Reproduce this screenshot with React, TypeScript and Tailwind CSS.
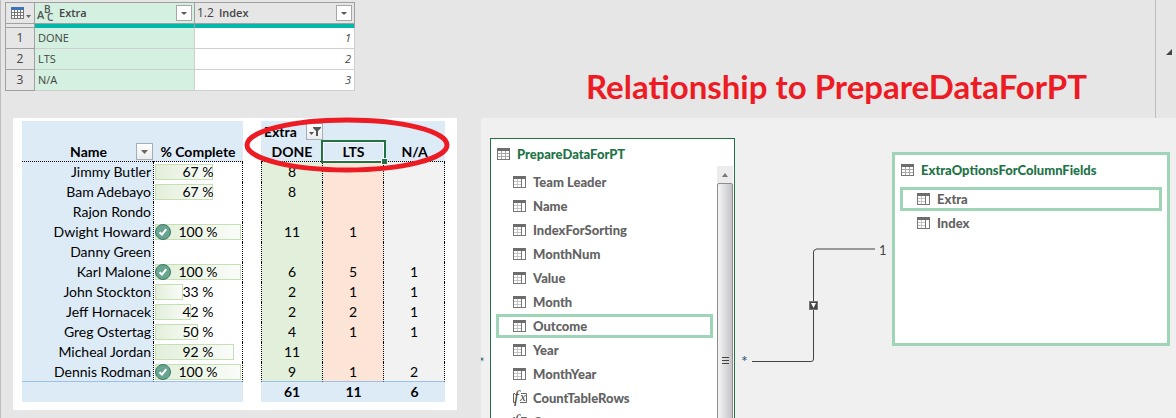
import type { ReactNode } from "react";

const QUERY_ROWS = [
  { extra: "DONE", index: 1 },
  { extra: "LTS", index: 2 },
  { extra: "N/A", index: 3 },
];

type Player = {
  name: string;
  complete?: number;
  done?: number;
  lts?: number;
  na?: number;
};

const PLAYERS: Player[] = [
  { name: "Jimmy Butler", complete: 67, done: 8 },
  { name: "Bam Adebayo", complete: 67, done: 8 },
  { name: "Rajon Rondo" },
  { name: "Dwight Howard", complete: 100, done: 11, lts: 1 },
  { name: "Danny Green" },
  { name: "Karl Malone", complete: 100, done: 6, lts: 5, na: 1 },
  { name: "John Stockton", complete: 33, done: 2, lts: 1, na: 1 },
  { name: "Jeff Hornacek", complete: 42, done: 2, lts: 2, na: 1 },
  { name: "Greg Ostertag", complete: 50, done: 4, lts: 1, na: 1 },
  { name: "Micheal Jordan", complete: 92, done: 11 },
  { name: "Dennis Rodman", complete: 100, done: 9, lts: 1, na: 2 },
];

const FIELDS = [
  "Team Leader",
  "Name",
  "IndexForSorting",
  "MonthNum",
  "Value",
  "Month",
  "Outcome",
  "Year",
  "MonthYear",
];

export default function App() {
  return (
    <div className="flex h-screen overflow-hidden border-l border-[#bdbdbd] bg-[#e6e6e6] font-['Lato','Liberation_Sans',sans-serif] text-[#1a1a1a]">
      <div className="flex w-[480px] shrink-0 flex-col items-start">
        <QueryTable />
        <PivotPanel />
      </div>

      <div className="flex min-w-0 flex-1 flex-col">
        <header className="flex h-[118px] shrink-0">
          <h1 className="flex-1 self-end pb-[10px] pl-[105px] text-[33px] leading-[44px] font-bold whitespace-nowrap text-[#ed1c24]">
            Relationship to PrepareDataForPT
          </h1>
          <div className="flex w-[21px] justify-end border-l border-[#bdbdbd] pt-[49px] pr-1">
            <svg width="6" height="6" aria-hidden="true">
              <path d="M6 0V6H0Z" fill="#444" />
            </svg>
          </div>
        </header>
        <Diagram />
      </div>
    </div>
  );
}

/* ---------- Query preview ---------- */

function QueryTable() {
  return (
    <table className="mt-[2px] ml-1 w-[350px] table-fixed border-separate border-spacing-0 font-['Open_Sans','Noto_Sans',sans-serif] text-[11px] leading-[16px] text-[#444]">
      <colgroup>
        <col className="w-[30px]" />
        <col className="w-[160px]" />
        <col className="w-[160px]" />
      </colgroup>
      <thead>
        <tr className="h-[22px]">
          <td className="border border-[#a0a0a0] p-0">
            <button type="button" aria-label="Table options" className="ml-[5px] flex items-end gap-[2px]">
              <QueryGridIcon />
              <svg width="5" height="3" className="mb-px" aria-hidden="true">
                <path d="M0 0H5L2.5 3Z" fill="#666" />
              </svg>
            </button>
          </td>
          <th scope="col" className="border-y border-r border-[#a0a0a0] bg-[#d3f0e0] p-0 font-semibold">
            <div className="flex items-center pr-[2px] pl-[2px]">
              <svg width="17" height="18" className="mr-[5px] shrink-0 overflow-visible" fill="#555" aria-hidden="true">
                <text x="0" y="15" fontSize="11">A</text>
                <text x="7" y="9" fontSize="10">B</text>
                <text x="10" y="17" fontSize="10">C</text>
              </svg>
              <span>Extra</span>
              <DropButton label="Filter Extra" />
            </div>
          </th>
          <th scope="col" className="border-y border-r border-[#a0a0a0] p-0 font-semibold">
            <div className="flex items-center pr-[2px] pl-[2px]">
              <span className="mr-[5px] text-[12px] font-normal">1.2</span>
              <span>Index</span>
              <DropButton label="Filter Index" />
            </div>
          </th>
        </tr>
        <tr className="h-1">
          <td className="border-x border-b border-[#a0a0a0] p-0" />
          <td className="border-r border-[#a0a0a0] bg-[#01b8aa] p-0" />
          <td className="border-r border-[#a0a0a0] bg-[#01b8aa] p-0" />
        </tr>
      </thead>
      <tbody>
        {QUERY_ROWS.map((row) => (
          <tr key={row.index} className="h-[21px]">
            <th scope="row" className="border-x border-b border-[#a0a0a0] p-0 text-[12px] font-normal">
              {row.index}
            </th>
            <td className="border-r border-b border-[#cfcfcf] bg-[#d3f0e0] p-0 pl-[3px]">{row.extra}</td>
            <td className="border-r border-b border-[#cfcfcf] bg-white p-0 pr-[3px] text-right italic">
              {row.index}
            </td>
          </tr>
        ))}
      </tbody>
    </table>
  );
}

function DropButton({ label }: { label: string }) {
  return (
    <button
      type="button"
      aria-label={label}
      className="ml-auto flex size-4 items-center justify-center border border-[#a6a6a6] bg-white"
    >
      <svg width="6" height="3" aria-hidden="true">
        <path d="M0 0H6L3 3Z" fill="#555" />
      </svg>
    </button>
  );
}

function QueryGridIcon() {
  return (
    <svg width="13" height="12" shapeRendering="crispEdges" aria-hidden="true">
      <rect width="13" height="12" fill="#777" />
      <rect width="13" height="3" fill="#3e73b5" />
      {[3, 6, 9].map((y) =>
        [1, 4, 7, 10].map((x) => <rect key={`${x}-${y}`} x={x} y={y} width="2" height="2" fill="#fff" />)
      )}
    </svg>
  );
}

/* ---------- Pivot tables ---------- */

function PivotPanel() {
  return (
    <section className="relative mt-[27px] ml-3 flex gap-[18px] bg-white pt-[3px] pr-3 pb-2 pl-[9px] text-[14px] leading-[18px] text-black">
      <CompletionTable />
      <ExtraTable />
      {/* Hand-drawn highlight round the column fields */}
      <svg width="208" height="58" className="pointer-events-none absolute -top-[2px] left-[230px]" aria-hidden="true">
        <ellipse cx="104" cy="29" rx="100" ry="25" fill="none" stroke="#ed1c24" strokeWidth="5" />
      </svg>
    </section>
  );
}

function CompletionTable() {
  return (
    <table className="w-[221px] table-fixed border-separate border-spacing-0">
      <colgroup>
        <col className="w-[131px]" />
        <col className="w-[90px]" />
      </colgroup>
      <thead className="bg-[#ddebf7]">
        <tr className="h-5">
          <td colSpan={2} className="p-0" />
        </tr>
        <tr className="h-[21px]">
          <th scope="col" className="relative border-b border-dotted border-black p-0 pt-[2px] pl-[2px]">
            Name
            <PivotButton label="Filter Name">
              <path d="M5 7H12L8.5 11Z" fill="#666" />
            </PivotButton>
          </th>
          <th scope="col" className="border-b border-dotted border-black p-0 pt-[2px] whitespace-nowrap">
            % Complete
          </th>
        </tr>
      </thead>
      <tbody className="[&>tr:last-child>*]:border-b [&>tr:last-child>*]:border-b-[#9bc2e6] [&>tr:last-child>*]:[border-bottom-style:solid]">
        {PLAYERS.map((p) => (
          <tr key={p.name} className="h-5">
            <th scope="row" className="bg-[#ddebf7] p-0 pr-[2px] text-right font-normal">
              {p.name}
            </th>
            <td className="border-x border-dotted border-black p-0">
              {p.complete !== undefined && <CompletionBar value={p.complete} />}
            </td>
          </tr>
        ))}
      </tbody>
      <tfoot className="bg-[#ddebf7]">
        <tr className="h-5">
          <td colSpan={2} className="p-0" />
        </tr>
      </tfoot>
    </table>
  );
}

function CompletionBar({ value }: { value: number }) {
  return (
    <div className="relative mx-px text-center">
      <div
        className="absolute inset-y-px left-0 border border-[#c6e0b4] bg-linear-to-r from-[#e2efda] to-[#fafcf9]"
        style={{ width: `${value}%` }}
      />
      {value === 100 && (
        <svg width="16" height="16" viewBox="0 0 16 16" className="absolute top-px left-0" aria-hidden="true">
          <circle cx="8" cy="8" r="7.5" fill="#68a490" stroke="#3f7a66" />
          <path d="M4.5 8.2L7 10.6L11.3 5.2" fill="none" stroke="#fff" strokeWidth="2" />
        </svg>
      )}
      <span className="relative">{value} %</span>
    </div>
  );
}

function ExtraTable() {
  return (
    <table className="w-[184px] table-fixed border-separate border-spacing-0 text-center">
      <colgroup>
        <col className="w-[62px]" />
        <col className="w-[61px]" />
        <col className="w-[61px]" />
      </colgroup>
      <thead className="bg-[#ddebf7]">
        <tr className="h-5">
          <th className="relative p-0 pt-[2px] pl-[3px] text-left">
            Extra
            <PivotButton label="Filter Extra">
              <path d="M7 4H15V5L12 8V13H10V8L7 5Z" fill="#555" />
              <path d="M3 9H8L5.5 12Z" fill="#555" />
            </PivotButton>
          </th>
          <td colSpan={2} className="p-0" />
        </tr>
        <tr className="h-[21px]">
          <th scope="col" className="border-b border-dotted border-black p-0 pt-[2px]">DONE</th>
          <th scope="col" className="relative border-b border-dotted border-black p-0 pt-[2px]">
            LTS
            {/* Active cell frame with its fill handle */}
            <span className="absolute -inset-x-[2px] -top-px -bottom-[2px] border-2 border-[#217346] outline-1 -outline-offset-3 outline-white" />
            <span className="absolute -right-[3px] -bottom-[3px] size-[6px] border-t border-l border-white bg-[#217346]" />
          </th>
          <th scope="col" className="border-b border-dotted border-black p-0 pt-[2px]">N/A</th>
        </tr>
      </thead>
      <tbody className="[&>tr:last-child>*]:border-b [&>tr:last-child>*]:border-b-[#9bc2e6] [&>tr:last-child>*]:[border-bottom-style:solid]">
        {PLAYERS.map((p) => (
          <tr key={p.name} className="h-5">
            <td className="border-x border-dotted border-black bg-[#e2efda] p-0">{p.done}</td>
            <td className="border-r border-dotted border-black bg-[#fce4d6] p-0">{p.lts}</td>
            <td className="border-r border-dotted border-black bg-[#f2f2f2] p-0">{p.na}</td>
          </tr>
        ))}
      </tbody>
      <tfoot className="bg-[#ddebf7] font-bold">
        <tr className="h-5">
          <td className="p-0">61</td>
          <td className="p-0">11</td>
          <td className="p-0">6</td>
        </tr>
      </tfoot>
    </table>
  );
}

function PivotButton({ label, children }: { label: string; children: ReactNode }) {
  return (
    <button
      type="button"
      aria-label={label}
      className="absolute right-0 bottom-px size-[17px] border border-[#a3aebb] bg-linear-to-b from-white to-[#ececec]"
    >
      <svg width="17" height="17" className="-m-px" aria-hidden="true">
        {children}
      </svg>
    </button>
  );
}

/* ---------- Relationship diagram ---------- */

function Diagram() {
  return (
    <main className="relative flex flex-1 items-start overflow-hidden bg-[#f0f0f0] text-[13px] leading-[18px] font-black text-[#636363]">
      {/* End of a relationship that leaves the view on the left */}
      <span className="absolute top-[235px] -left-[2px] text-[#2f5573] font-normal">*</span>

      <article className="mt-5 ml-[9px] w-[245px] shrink-0 border border-[#217346] bg-white">
        <EntityTitle name="PrepareDataForPT" />
        <div className="flex pr-px">
          <ul className="flex-1 pt-1 pr-1 pl-[5px]">
            {FIELDS.map((f) => (
              <Field key={f} name={f} active={f === "Outcome"} />
            ))}
            <Field name="CountTableRows" icon={<FxIcon />} />
            <Field name="Outcome" icon={<FxIcon />} />
          </ul>
          <div className="flex w-4 flex-col bg-[#ececec]">
            <div className="flex h-[17px] items-center justify-center">
              <svg width="6" height="4" aria-hidden="true">
                <path d="M0 4L3 0L6 4Z" fill="#777" />
              </svg>
            </div>
            <div className="flex flex-1 justify-center rounded-t-[2px] border border-[#8c8c8c] bg-linear-to-r from-[#f5f5f5] to-[#c4c5c9] pt-[172px]">
              <svg width="7" height="8" className="shrink-0" shapeRendering="crispEdges" aria-hidden="true">
                <path d="M0 1.5H7M0 4.5H7M0 7.5H7" stroke="#444" />
              </svg>
            </div>
          </div>
        </div>
      </article>

      <Connector />

      <article className="mt-[34px] min-h-[194px] w-[278px] shrink-0 border-3 border-[#9fd5b7] bg-white">
        <EntityTitle name="ExtraOptionsForColumnFields" />
        <ul className="px-[5px] pt-[5px]">
          <Field name="Extra" active />
          <Field name="Index" />
        </ul>
      </article>
    </main>
  );
}

function EntityTitle({ name }: { name: string }) {
  return (
    <h2 className="flex items-center gap-[7px] pt-[6px] pb-[3px] pl-[6px] text-[#217346]">
      <TableIcon />
      {name}
    </h2>
  );
}

function Field({ name, active, icon }: { name: string; active?: boolean; icon?: ReactNode }) {
  return (
    <li
      className={`flex h-6 items-center gap-[7px] border-3 pl-[14px] ${
        active ? "border-[#9fd5b7]" : "border-transparent"
      }`}
    >
      {icon ?? <ColumnIcon />}
      {name}
    </li>
  );
}

function Connector() {
  return (
    <svg
      width="157"
      height="260"
      fill="none"
      stroke="#444"
      className="shrink-0 font-normal"
      role="img"
      aria-label="Many to one relationship"
    >
      <path d="M17 243.5H76Q78.500 243.500 78.500 241V134Q78.500 131.500 81 131.500" />
      <path d="M81 131H140" stroke="#999" strokeWidth="2" />
      <rect x="74.500" y="183.500" width="8" height="8" fill="#444" stroke="#777" />
      <path d="M76 185H81L78.500 190Z" fill="#fff" stroke="none" />
      <text x="6" y="249" fontSize="16" fill="#2f5573" stroke="none">*</text>
      <text x="144" y="137" fontSize="13" fill="#444" stroke="none">1</text>
    </svg>
  );
}

function TableIcon() {
  return (
    <svg width="13" height="12" className="shrink-0" shapeRendering="crispEdges" aria-hidden="true">
      <rect x="0.500" y="0.500" width="12" height="11" fill="#fff" stroke="#777" />
      <rect width="13" height="3" fill="#6d6d6d" />
      <path d="M1 5.500H12M1 8.500H12M4.500 3V11M8.500 3V11" stroke="#a8a8a8" />
    </svg>
  );
}

function ColumnIcon() {
  return (
    <svg width="13" height="12" className="shrink-0" shapeRendering="crispEdges" aria-hidden="true">
      <rect x="0.500" y="0.500" width="12" height="11" fill="#fff" stroke="#777" />
      <rect width="13" height="3" fill="#6d6d6d" />
      <path d="M1 5.500H8M1 8.500H8M4.500 3V11" stroke="#c4c4c4" />
      <path d="M8.500 3V11" stroke="#777" />
    </svg>
  );
}

function FxIcon() {
  return (
    <svg width="14" height="16" className="-mr-px shrink-0 overflow-visible" aria-hidden="true">
      <path d="M2 3.500H0.500V12.500H2M8 3.500H13.500V12.500H7" fill="none" stroke="#666" />
      <text x="1" y="12" fontSize="17" fill="#444" className="font-['Liberation_Serif',serif] font-normal italic">
        f
      </text>
      <text x="7" y="11" fontSize="13" fill="#444" className="font-['Liberation_Serif',serif] font-normal italic">
        x
      </text>
    </svg>
  );
}
